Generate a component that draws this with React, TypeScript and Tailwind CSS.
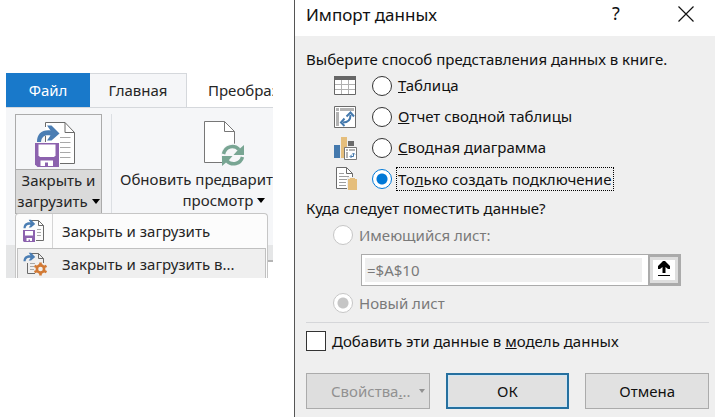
import type { ReactNode } from 'react';

function ArrowShape() {
  return (
    <path d="M1 18 C1 10 6 5.500 14.500 6.500 L11 1.500 H15.500 L23.500 9.500 L15.500 16.500 H11 L14.500 11.500 C8.500 10.500 5.500 13 5 18 Z" fill="#4a7db3" />
  );
}

function CloseLoadIcon() {
  return (
    <svg width="42" height="46" viewBox="0 0 42 46" fill="none">
      <path d="M11.500 1.500 H31 L40.500 11 V42.500 H11.500 Z" fill="#fff" />
      <path d="M11.500 6 V1.500 H31 L40.500 11.500 V42.500 H26 M11.500 15 V21" stroke="#6b6b6b" />
      <path d="M31 1.500 V11.500 H40.500" stroke="#6b6b6b" />
      <path d="M26 16.500 H36.500 M26 21.500 H36.500 M26 26.500 H36.500 M26 31.500 H36.500 M26 36.500 H36.500" stroke="#a9a9a9" />
      <g transform="translate(2 3)">
        <ArrowShape />
      </g>
      <path d="M1 22 H25 V46 H3.500 L1 43.500 Z" fill="#8c62ae" />
      <path d="M4.500 23.500 H21.500 V34.500 L20 36 H6 L4.500 34.500 Z" fill="#fff" />
      <path d="M6.500 39.500 H19 V45 H14 V41.500 H11 V45 H6.500 Z" fill="#fff" />
    </svg>
  );
}

function RefreshPageIcon() {
  return (
    <svg width="42" height="46" viewBox="0 0 42 46" fill="none">
      <path d="M1.500 1.500 H21.500 L31.500 11.500 V42.500 H1.500 Z" fill="#fff" stroke="#777" />
      <path d="M21.500 1.500 V11.500 H31.500" stroke="#777" />
      <circle cx="30" cy="35.500" r="12" fill="#f5f6f8" />
      <path d="M20.500 34 C22.500 26 31 24.500 36 29.500" stroke="#78a593" strokeWidth="3.500" />
      <path d="M41 25 V35 H30.500 L34 31 Z" fill="#78a593" />
      <path d="M39.500 37 C37.500 44 29 46 24 41" stroke="#78a593" strokeWidth="3.500" />
      <path d="M19 46 V36 H29.500 L26 40 Z" fill="#78a593" />
    </svg>
  );
}

function CloseLoadSmallIcon() {
  return (
    <svg width="22" height="24" viewBox="0 0 22 24" fill="none">
      <path d="M6.500 2 V1.500 H15.500 L20.500 6.500 V21.500 H13" stroke="#6b6b6b" />
      <path d="M15.500 1.500 V6.500 H20.500" stroke="#6b6b6b" />
      <path d="M14 10.500 H18 M14 13.500 H18 M14 16.500 H18" stroke="#a9a9a9" />
      <g transform="scale(.52)">
        <ArrowShape />
      </g>
      <path d="M0 11 H12 V23 H1 L0 22 Z" fill="#8c62ae" />
      <path d="M2 12 H10 V16.500 H2 Z M3.500 19 H9 V22 H7 V20.500 H5.500 V22 H3.500 Z" fill="#fff" />
    </svg>
  );
}

function CloseLoadToIcon() {
  return (
    <svg width="24" height="24" viewBox="0 0 24 24" fill="none">
      <path d="M4.500 11 V21.500 H12 M7 1.500 H15.500 L20.500 6.500 V11" stroke="#6b6b6b" />
      <path d="M15.500 1.500 V6.500 H20.500" stroke="#6b6b6b" />
      <path d="M7 11.500 H12 M7 14.500 H11 M7 17.500 H11" stroke="#a9a9a9" />
      <g transform="scale(.52)">
        <ArrowShape />
      </g>
      <circle cx="17.500" cy="17" r="3.600" stroke="#d27a35" strokeWidth="2.600" />
      <path d="M17.500 10.500 V13 M17.500 21 V23.500 M11.500 13.800 L14.200 15.200 M20.800 18.800 L23.500 20.200 M11.500 20.200 L14.200 18.800 M20.800 15.200 L23.500 13.800" stroke="#d27a35" strokeWidth="2.600" />
    </svg>
  );
}

function TableIcon() {
  return (
    <svg width="22" height="20" viewBox="0 0 22 20" fill="none">
      <path d="M.5 .5 H21.500 V18.500 H.5 Z" fill="#fff" stroke="#666" />
      <path d="M0 0 H22 V4 H0 Z" fill="#666" />
      <path d="M1 8.500 H21 M1 13.500 H21 M7.500 4 V18 M14.500 4 V18" stroke="#b0b0b0" />
    </svg>
  );
}

function PivotTableIcon() {
  return (
    <svg width="22" height="22" viewBox="0 0 22 22" fill="none">
      <path d="M.5 .5 H21.500 V21.500 H.5 Z" fill="#fff" stroke="#6b6b6b" />
      <path d="M2 2 H5 V5 H2 Z M6 2 H20 V5 H6 Z M2 6 H5 V20 H2 Z" fill="#b3b3b3" />
      <path d="M9 16.500 C14 16.500 16.500 14 16.500 9" stroke="#4479ad" strokeWidth="2" />
      <path d="M12.500 10.500 L16.500 6.500 L20 10.500 M10.500 12.500 L7 16.500 L10.500 20" stroke="#4479ad" strokeWidth="2" />
    </svg>
  );
}

function PivotChartIcon() {
  return (
    <svg width="23" height="24" viewBox="0 0 23 24" fill="none">
      <path d="M0 9 H6 V22 H0 Z" fill="#4479ad" />
      <path d="M7 1 H13 V22 H7 Z" fill="#e5be7c" />
      <path d="M14 5 H20 V10 H14 Z" fill="#6b6b6b" />
      <path d="M10.500 11.500 H22.500 V23.500 H10.500 Z" fill="#fff" stroke="#777" />
      <path d="M12 13 H14 V15 H12 Z M15 13 H21 V15 H15 Z M12 16 H14 V22 H12 Z" fill="#b3b3b3" />
      <path d="M16.500 20.500 H19.500 V17.500 M18 18.500 L19.500 17 L21 18.500 M17.500 19 L16 20.500 L17.500 22" stroke="#4479ad" />
    </svg>
  );
}

function ConnectionIcon() {
  return (
    <svg width="22" height="24" viewBox="0 0 22 24" fill="none" className="ml-0.5">
      <path d="M.5 .5 H10.500 L16.500 6.500 V21.500 H.5 Z" fill="#fff" stroke="#6b6b6b" />
      <path d="M10.500 .5 V6.500 H16.500" stroke="#6b6b6b" />
      <path d="M3 6.500 H8 M3 9.500 H13 M3 12.500 H11 M3 15.500 H10 M3 18.500 H10" stroke="#a0a0a0" />
      <path d="M11 10 H21 V23 H11 Z" fill="#efefef" />
      <path d="M14 11 H19 V12 H21 V23 H12 V12 H14 Z" fill="#e5be7c" />
    </svg>
  );
}

function Caret() {
  return (
    <svg width="8" height="5" viewBox="0 0 8 5" className="mb-0.5 ml-1 inline-block align-middle text-black">
      <path d="M0 0 H8 L4 5 Z" fill="currentColor" />
    </svg>
  );
}

function Ribbon() {
  return (
    <section className="relative mt-[73px] ml-1.5 h-[205px] w-[267px] shrink-0 overflow-hidden text-[15px] whitespace-nowrap text-[#262626]">
      <nav className="flex h-[35px] border-b border-[#d5d8dc]">
        <button className="h-[34px] w-[84px] shrink-0 bg-[#1979ca] text-white">Файл</button>
        <button className="w-[97px] shrink-0 border-t border-r border-[#d5d8dc] bg-[#f5f6f8]">Главная</button>
        <button className="shrink-0 pl-[21px]">Преобразование</button>
      </nav>
      <div className="flex h-[137px] bg-[#f5f6f8] pt-1.5 pl-[9px]">
        <button className="flex h-[100px] w-[87px] shrink-0 flex-col border border-[#ababab]">
          <span className="flex h-[54px] w-full pt-1.5 pl-[18px]">
            <CloseLoadIcon />
          </span>
          <span className="w-full flex-1 border-t border-[#ababab] bg-[#dadada] leading-[21px]">
            Закрыть и<br />загрузить<Caret />
          </span>
        </button>
        <div className="ml-[9px] h-[120px] w-px shrink-0 bg-[#dcdfe3]" />
        <button className="ml-2 flex h-[100px] shrink-0 flex-col items-center">
          <span className="flex h-[55px] pt-1.5">
            <RefreshPageIcon />
          </span>
          <span className="leading-[21px]">
            Обновить предварительный<br />просмотр<Caret />
          </span>
        </button>
      </div>
      <div className="flex h-[33px]">
        <div className="w-[9px] bg-[#e5e6e7]" />
        <div className="h-[17px] flex-1 border-b-2 border-[#b5b5b5] bg-[#e5e6e7]" />
      </div>
      <div className="absolute top-[140px] left-[9px] w-[253px] rounded-t-sm border border-b-0 border-[#c6c6c6] bg-[#fcfcfc]">
        <button className="flex h-[34px] w-full items-center text-left">
          <span className="flex h-full w-[37px] items-center border-r border-[#d5d5d5] pl-[7px]">
            <CloseLoadSmallIcon />
          </span>
          <span className="pl-[9px]">Закрыть и загрузить</span>
        </button>
        <button className="ml-px flex h-8 w-[249px] items-center border border-[#c0c0c0] bg-[#efefef] text-left">
          <span className="w-[35px] pl-[5px]">
            <CloseLoadToIcon />
          </span>
          <span className="pl-[9px]">Закрыть и загрузить в...</span>
        </button>
      </div>
    </section>
  );
}

const radioClass =
  'h-5 w-5 shrink-0 appearance-none rounded-full border border-[#333] bg-white checked:border-[#0078d7] checked:bg-[radial-gradient(circle,#0078d7_0_5px,#fff_6px)] disabled:border-[#c6c6c6] disabled:checked:bg-[radial-gradient(circle,#c6c6c6_0_5px,#fff_6px)]';

type OptionProps = { id: string; icon: ReactNode; children: ReactNode; checked?: boolean };

function ViewOption({ id, icon, children, checked }: OptionProps) {
  return (
    <div className="flex h-[31px] items-center">
      <span className="w-[38px] shrink-0">{icon}</span>
      <input type="radio" name="view" id={id} defaultChecked={checked} className={radioClass} />
      <label
        htmlFor={id}
        className={checked ? 'ml-1 border border-dotted border-black pr-0.5 pl-px leading-[22px]' : 'ml-1.5'}
      >
        {children}
      </label>
    </div>
  );
}

function ImportDialog() {
  return (
    <main className="min-h-screen min-w-0 flex-1 border-l border-[#555] bg-[#efefef] text-[15px] whitespace-nowrap text-[#111]">
      <header className="flex h-9 items-start bg-white pt-[3px] pl-[11px]">
        <h1 className="flex-1 text-[17px] leading-6">Импорт данных</h1>
        <button className="w-5 text-lg leading-5" aria-label="Справка">?</button>
        <button className="mt-[3px] mr-[21px] ml-[52px]" aria-label="Закрыть">
          <svg width="16" height="16" viewBox="0 0 16 16">
            <path d="M.5 .5 L15.500 15.500 M15.500 .5 L.5 15.500" stroke="#111" strokeWidth="1.200" />
          </svg>
        </button>
      </header>
      <form className="pt-3 pr-1.5 pl-[11px]">
        <p className="leading-[22px]">Выберите способ представления данных в книге.</p>
        <div className="pl-7">
          <ViewOption id="table" icon={<TableIcon />}><u>Т</u>аблица</ViewOption>
          <ViewOption id="pivot" icon={<PivotTableIcon />}><u>О</u>тчет сводной таблицы</ViewOption>
          <ViewOption id="chart" icon={<PivotChartIcon />}><u>С</u>водная диаграмма</ViewOption>
          <ViewOption id="connection" icon={<ConnectionIcon />} checked>То<u>л</u>ько создать подключение</ViewOption>
        </div>
        <p className="leading-[29px]">Куда следует поместить данные?</p>
        <div className="pl-[27px] text-[#7a7a7a]">
          <div className="flex h-6 items-center">
            <input type="radio" name="place" id="existing" disabled className={radioClass} />
            <label htmlFor="existing" className="ml-1.5">Имеющийся лист:</label>
          </div>
          <div className="mt-[7px] mr-7 ml-7 flex h-8 border border-[#ababab] bg-white">
            <input
              aria-label="Диапазон"
              disabled
              defaultValue="=$A$10"
              className="m-[3px] mr-1.5 min-w-0 flex-1 bg-[#efefef] pl-0.5"
            />
            <button type="button" aria-label="Свернуть" className="flex w-8 items-center justify-center border-2 border-[#ababab] bg-[#dedede]">
              <svg width="22" height="20" viewBox="0 0 22 20">
                <path d="M0 0 H22 V20 H0 Z" fill="#fff" />
                <path d="M10 1 H12 L17 6 V9 H15 L12.500 7 V13 H9.500 V7 L7 9 H5 V6 Z M5 15 H17 V16 H5 Z" fill="#000" />
              </svg>
            </button>
          </div>
          <div className="mt-[5px] flex h-6 items-center">
            <input type="radio" name="place" id="new" disabled defaultChecked className={`${radioClass} checked:disabled:border-[#c6c6c6]`} />
            <label htmlFor="new" className="ml-1.5">Новый лист</label>
          </div>
        </div>
        <hr className="mt-[7px] border-[#d5d6d9]" />
        <div className="mt-2 flex h-5 items-center">
          <input type="checkbox" id="model" className="h-5 w-5 shrink-0 appearance-none border border-[#333] bg-white" />
          <label htmlFor="model" className="ml-1.5">Добавить эти данные в <u>м</u>одель данных</label>
        </div>
        <div className="mt-[22px] grid h-9 grid-cols-3 gap-4">
          <button type="button" disabled className="flex items-center justify-between border border-[#ababab] bg-[#dedede] pr-1 pl-6 text-[#919191]">
            <span>Свойства<u>.</u>..</span>
            <svg width="6" height="4" viewBox="0 0 6 4">
              <path d="M0 0 H6 L3 4 Z" fill="currentColor" />
            </svg>
          </button>
          <button type="submit" className="border-2 border-[#26709f] bg-[#e1e1e1] ring-1 ring-[#cfe6f5] ring-inset">ОК</button>
          <button type="button" className="border border-[#ababab] bg-[#e1e1e1]">Отмена</button>
        </div>
      </form>
    </main>
  );
}

export default function App() {
  return (
    <div className="flex min-h-screen items-start gap-[21px] bg-white font-['Noto_Sans',sans-serif]">
      <Ribbon />
      <ImportDialog />
    </div>
  );
}
